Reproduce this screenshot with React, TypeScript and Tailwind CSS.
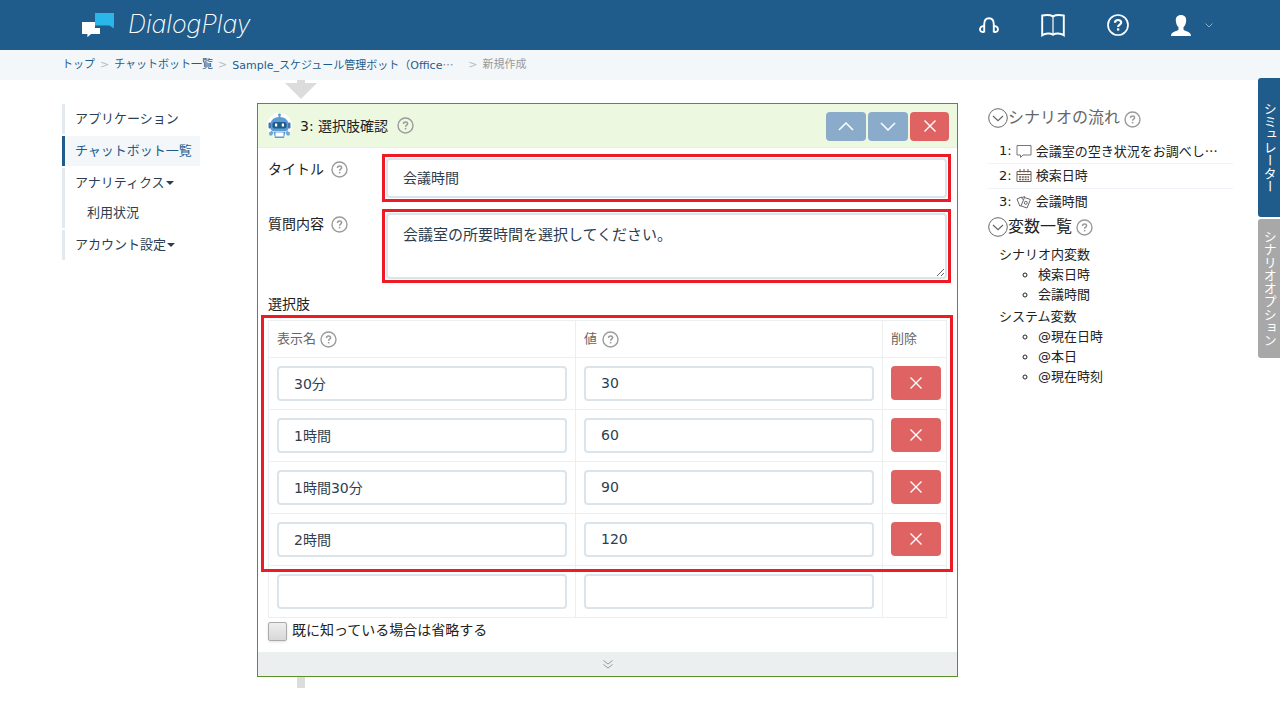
import React from "react";

const JP = "font-['Noto_Sans_CJK_JP',sans-serif]";

function HelpIcon({ className = "" }: { className?: string }) {
  return (
    <svg viewBox="0 0 17 17" className={"h-[17px] w-[17px] shrink-0 text-[#9b9b9b] " + className} fill="none" stroke="currentColor" aria-label="ヘルプ">
      <circle cx="8.5" cy="8.5" r="7.5" strokeWidth="1.4" />
      <path d="M6.5 7C6.5 5.700 7.300 5 8.500 5S10.600 5.700 10.600 6.700C10.600 8.100 8.600 8.200 8.600 9.700" strokeWidth="1.500" />
      <path d="M8.600 10.900V12.400" strokeWidth="1.600" />
    </svg>
  );
}

function Cross() {
  return (
    <svg viewBox="0 0 12 12" className="h-3 w-3" fill="none" stroke="#fff" strokeWidth="1.4" aria-hidden="true">
      <path d="M.5.5 11.5 11.5M11.5.5.5 11.5" />
    </svg>
  );
}

function Chevron({ up = false }: { up?: boolean }) {
  return (
    <svg viewBox="0 0 16 9" className="h-[9px] w-4" fill="none" stroke="#fff" strokeWidth="1.5" aria-hidden="true">
      <path d={up ? "M1 8 8 1 15 8" : "M1 1 8 8 15 1"} />
    </svg>
  );
}

function CircleChevron() {
  return (
    <svg viewBox="0 0 20 20" className="h-5 w-5 shrink-0" fill="none" stroke="#666" aria-hidden="true">
      <circle cx="10" cy="10" r="9.3" />
      <path d="M5 8 10 12.7 15 8" strokeWidth="1.2" />
    </svg>
  );
}

function Robot() {
  return (
    <svg viewBox="0 0 25 27" className="h-[27px] w-[25px] shrink-0" aria-hidden="true">
      <circle cx="12.500" cy="13.500" r="12.500" fill="#fff" />
      <path d="M11.600 3h1.800v4h-1.800z" fill="#5b9bd1" />
      <circle cx="12.500" cy="2.800" r="1.400" fill="#5b9bd1" />
      <path d="M3.500 12.500C3.500 8 7.200 5 12.500 5S21.500 8 21.500 12.500V16c0 2-1.500 3.300-3.500 3.300H7c-2 0-3.500-1.300-3.500-3.300z" fill="#5b9bd1" />
      <rect x="1.500" y="10.500" width="2.500" height="6" rx="1" fill="#3f78b0" />
      <rect x="21" y="10.500" width="2.500" height="6" rx="1" fill="#3f78b0" />
      <rect x="5.500" y="10" width="14" height="6.500" rx="2" fill="#1f5c8b" />
      <rect x="8" y="11.500" width="2.200" height="3" fill="#fff" />
      <rect x="14.800" y="11.500" width="2.200" height="3" fill="#fff" />
      <path d="M6.500 19.800h12L17 26H8z" fill="#5b9bd1" />
      <rect x="8.500" y="20.500" width="8" height="4" fill="#fff" />
      <path d="M2 20.500 5 18.800 6.500 21 5 23.500H2.500z" fill="#6fa6d6" />
      <path d="M23 20.500 20 18.800 18.500 21 20 23.500h2.500z" fill="#6fa6d6" />
    </svg>
  );
}

function Logo() {
  return (
    <svg viewBox="0 0 32 24" className="h-6 w-8" aria-hidden="true">
      <path d="M0 9h13v6h5v6H9l-3.6 3.3V21H0z" fill="#fff" />
      <path d="M13 0h19v12.500h-.2v3L27.500 12.500H13z" fill="#29b6e8" />
    </svg>
  );
}

const inputBase = "block w-full rounded border-2 border-[#dae4ec] bg-white text-sm text-[#2c3e50] outline-none";

const choices = [
  { name: "30分", value: "30" },
  { name: "1時間", value: "60" },
  { name: "1時間30分", value: "90" },
  { name: "2時間", value: "120" },
  { name: "", value: "" },
];

function Header() {
  return (
    <header className="flex h-[50px] items-center bg-[#1f5c8b] pr-[67px] pl-[82px] text-white">
      <a href="#" className="flex items-center gap-[14px]">
        <Logo />
        <span className="font-['Inter',sans-serif] text-[25px] font-extralight italic">DialogPlay</span>
      </a>
      <nav className="ml-auto flex items-center gap-[42px]">
        <a href="#" aria-label="サポート">
          <svg viewBox="0 0 20 18" className="h-[18px] w-5" fill="none" stroke="#fff" strokeWidth="1.9">
            <path d="M5.200 16.500V8.500C5.200 4.500 7 2.200 10 2.200S14.800 4.500 14.800 8.500V16.500" />
            <path d="M5 10.200C2.500 9.800 1 11.500 1 13.300S2.500 16.300 5 16M15 10.200C17.500 9.800 19 11.500 19 13.300S17.500 16.300 15 16" />
          </svg>
        </a>
        <a href="#" aria-label="マニュアル">
          <svg viewBox="0 0 24 23" className="h-[23px] w-6" fill="none" stroke="#fff" strokeWidth="1.900">
            <path d="M12 2.300C9.500.900 4.500.900 1.200 1.500V21.300C4.500 19 9.500 19 12 20.800 14.500 19 19.500 19 22.800 21.300V1.500C19.500.900 14.500.900 12 2.300Z" />
            <path d="M12 2.500V21" strokeWidth="1.200" />
          </svg>
        </a>
        <a href="#" aria-label="ヘルプ">
          <svg viewBox="0 0 22 22" className="h-[22px] w-[22px]" fill="none" stroke="#fff">
            <circle cx="11" cy="11" r="10" strokeWidth="1.700" />
            <path d="M8 8.800C8 7 9.300 6 11 6S14.200 7 14.200 8.600C14.200 10.600 11.100 10.600 11.100 13" strokeWidth="2.200" />
            <path d="M11.100 14.300V16.600" strokeWidth="2.300" />
          </svg>
        </a>
        <button type="button" className="flex items-center gap-[14px]" aria-label="アカウント">
          <svg viewBox="0 0 20 21" className="h-[21px] w-5" fill="#fff">
            <path d="M10 0C6.500 0 4.700 2.300 4.800 5.500 4.900 8.500 6 10.800 7.500 12.200V14.500C7.500 16 0 16 0 21H20C20 16 12.500 16 12.500 14.500V12.200C14 10.800 15.100 8.500 15.200 5.500 15.300 2.300 13.500 0 10 0Z" />
          </svg>
          <svg viewBox="0 0 8 5" className="h-[5px] w-2" fill="none" stroke="#8fa9bd">
            <path d="M.500.500 4 4 7.500.500" />
          </svg>
        </button>
      </nav>
    </header>
  );
}

function Breadcrumb() {
  const sep = <span className="text-[#bbb]">&gt;</span>;
  return (
    <nav className="flex h-[30px] items-center gap-[5px] bg-[#f3f7fa] pt-px pl-[62px] text-[11px] text-[#1f5c8b]">
      <a href="#">トップ</a>
      {sep}
      <a href="#">チャットボット一覧</a>
      {sep}
      <a href="#" className="w-[231px] whitespace-nowrap">
        Sample_スケジュール管理ボット（Office<span className={JP + " text-[#888]"}>…</span>
      </a>
      {sep}
      <span className="text-[#999]">新規作成</span>
    </nav>
  );
}

function SideNav() {
  const item = "flex h-[30px] items-center pl-[10px]";
  const caret = <span className="ml-px border-x-4 border-t-4 border-x-transparent border-t-[#2c3e50]" />;
  return (
    <nav className="flex w-[138px] shrink-0 flex-col gap-[2px] pt-6 text-[13px] whitespace-nowrap text-[#2c3e50]">
      <a href="#" className={item + " border-l-[3px] border-[#e1eaf2]"}>アプリケーション</a>
      <a href="#" className={item + " border-l-[3px] border-[#1f5c8b] bg-[#f3f7fa] text-[#1f5c8b]"}>チャットボット一覧</a>
      <div className="border-l-[3px] border-[#e1eaf2]">
        <a href="#" className={item}>アナリティクス{caret}</a>
        <a href="#" className="flex h-[30px] items-center pl-[22px]">利用状況</a>
      </div>
      <a href="#" className={item + " border-l-[3px] border-[#e1eaf2]"}>アカウント設定{caret}</a>
    </nav>
  );
}

function ChoiceTable() {
  const cell = "border border-[#ebefef] p-2";
  return (
    <div className="relative">
      <table className="w-full table-fixed border-collapse">
        <colgroup>
          <col />
          <col />
          <col className="w-16" />
        </colgroup>
        <thead>
          <tr className="h-[37px] text-left text-[13px] text-[#666]">
            <th className="border border-[#ebefef] px-2 font-normal">
              <span className="flex items-center gap-1">表示名<HelpIcon /></span>
            </th>
            <th className="border border-[#ebefef] px-2 font-normal">
              <span className="flex items-center gap-[5px]">値<HelpIcon /></span>
            </th>
            <th className="border border-[#ebefef] px-2 font-normal">削除</th>
          </tr>
        </thead>
        <tbody>
          {choices.map((c, i) => (
            <tr key={i}>
              <td className={cell}>
                <input aria-label="表示名" defaultValue={c.name} className={inputBase + " h-[35px] px-[15px] pb-[2px]"} />
              </td>
              <td className={cell}>
                <input aria-label="値" defaultValue={c.value} className={inputBase + " h-[35px] px-[15px] pb-[2px]"} />
              </td>
              <td className="border border-[#ebefef] py-2 pr-1 pl-2 align-top">
                {c.name && (
                  <button type="button" aria-label="削除" className="flex h-[34px] w-[50px] items-center justify-center rounded bg-[#e06363]">
                    <Cross />
                  </button>
                )}
              </td>
            </tr>
          ))}
        </tbody>
      </table>
      <div className="pointer-events-none absolute -top-[5px] -right-[6px] bottom-[46px] -left-[7px] border-3 border-[#ed1c24]" />
    </div>
  );
}

function Editor() {
  const label = "flex w-[118px] shrink-0 items-center gap-[7px] self-start h-[22px]";
  return (
    <main className="ml-[57px] min-w-0 flex-1 text-sm text-[#222]">
      <svg viewBox="0 0 32 19" className="ml-7 h-[19px] w-8" fill="#dcdcdc" aria-hidden="true">
        <path d="M12 0h8v3h12L16 19 0 3h12z" />
      </svg>
      <section className="mt-1 border border-[#5a9125]">
        <div className="flex h-11 items-center border-b border-[#e8ecec] bg-[#ecf8e0] pr-2 pl-[9px]">
          <Robot />
          <h2 className="ml-2">3: 選択肢確認</h2>
          <HelpIcon className="ml-[9px]" />
          <div className="ml-auto flex gap-[2px] pt-px">
            <button type="button" aria-label="上へ" className="flex h-[29px] w-10 items-center justify-center rounded bg-[#8babcb]"><Chevron up /></button>
            <button type="button" aria-label="下へ" className="flex h-[29px] w-10 items-center justify-center rounded bg-[#8babcb]"><Chevron /></button>
            <button type="button" aria-label="削除" className="flex h-[29px] w-[39px] items-center justify-center rounded bg-[#e06363]"><Cross /></button>
          </div>
        </div>
        <div className="px-[10px] pt-[10px]">
          <div className="flex">
            <label htmlFor="title" className={label}>タイトル<HelpIcon /></label>
            <div className="relative flex-1">
              <input id="title" defaultValue="会議時間" className={inputBase + " h-10 px-[15px] pb-[2px]"} />
              <div className="pointer-events-none absolute -inset-1 border-3 border-[#ed1c24]" />
            </div>
          </div>
          <div className="mt-[15px] flex">
            <label htmlFor="question" className={label}>質問内容<HelpIcon /></label>
            <div className="relative flex-1">
              <textarea id="question" defaultValue="会議室の所要時間を選択してください。" className="block h-[66px] w-full rounded border-2 border-[#dae4ec] bg-white px-[15px] py-2 text-[15px] leading-6 text-[#2c3e50] outline-none" />
              <div className="pointer-events-none absolute -inset-1 border-3 border-[#ed1c24]" />
            </div>
          </div>
          <h3 className="mt-[15px] mb-[6px] leading-5">選択肢</h3>
          <ChoiceTable />
          <div className="mt-1 flex h-[30px] gap-[5px]">
            <input id="skip" type="checkbox" className="h-[19px] w-[19px] appearance-none rounded-[2px] border border-[#aaa] bg-linear-to-b from-[#eee] to-[#d8d8d8] shadow-sm" />
            <label htmlFor="skip" className="leading-4">既に知っている場合は省略する</label>
          </div>
        </div>
        <button type="button" aria-label="詳細を開く" className="flex h-6 w-full items-center justify-center bg-[#ebefef]">
          <svg viewBox="0 0 10 9" className="h-[9px] w-[10px]" fill="none" stroke="#999" aria-hidden="true">
            <path d="M.500.500 5 4 9.500.500M.500 4.500 5 8 9.500 4.500" />
          </svg>
        </button>
      </section>
      <div className="ml-10 h-[11px] w-2 bg-[#dcdcdc]" />
    </main>
  );
}

function SpeechIcon() {
  return (
    <svg viewBox="0 0 16 14" className="h-[14px] w-4" fill="none" stroke="#777" aria-hidden="true">
      <path d="M1 1.500h14v9.500H7L4.500 13.500V11H1z" />
    </svg>
  );
}

function CalendarIcon() {
  return (
    <svg viewBox="0 0 16 14" className="h-[14px] w-4" fill="none" stroke="#6b5d50" aria-hidden="true">
      <path d="M1 2.500h14v10H1zM1 5.500h14M4 0v3.500M8 0v3.500M12 0v3.500" />
      <path d="M3 8h10M3 10.500h10" strokeWidth="1.500" strokeDasharray="2 .8" />
    </svg>
  );
}

function CardsIcon() {
  return (
    <svg viewBox="0 0 16 14" className="h-[14px] w-4" fill="none" stroke="#666" aria-hidden="true">
      <path d="M8.500 2.500 14.500 4.500 11 13 5 10.800z" />
      <path d="M5 10.800 3.800 11 1 4 5.500 2 6.500 4.500M6 2.500 9 1.500" />
      <circle cx="9.800" cy="7.800" r="1.500" />
    </svg>
  );
}

function Outline() {
  const heading = "flex items-center text-base";
  return (
    <aside className="ml-[30px] w-[245px] shrink-0 pt-6 text-[13px] text-[#222]">
      <h2 className={heading + " h-[34px] pb-[6px] text-[#666]"}>
        <CircleChevron />シナリオの流れ<HelpIcon className="mt-[2px] ml-1" />
      </h2>
      <ol className="divide-y divide-[#f0f4f8] whitespace-nowrap">
        <li className="flex h-[26px] items-center gap-1 pl-[11px]">1: <SpeechIcon /><a href="#" className={JP}>会議室の空き状況をお調べし…</a></li>
        <li className="flex h-[25px] items-center gap-1 pl-[11px]">2: <CalendarIcon /><a href="#">検索日時</a></li>
        <li className="flex h-[25px] items-center gap-1 pl-[11px]">3: <CardsIcon /><a href="#">会議時間</a></li>
      </ol>
      <h2 className={heading + " h-[31px] pb-[6px]"}>
        <CircleChevron />変数一覧<HelpIcon className="mt-[2px] ml-1" />
      </h2>
      <div className="pl-[11px] leading-5">
        <h3>シナリオ内変数</h3>
        <ul className="mb-[2px] list-[circle] pl-[39px]">
          <li>検索日時</li>
          <li>会議時間</li>
        </ul>
        <h3>システム変数</h3>
        <ul className="list-[circle] pl-[39px]">
          <li>@現在日時</li>
          <li>@本日</li>
          <li>@現在時刻</li>
        </ul>
      </div>
    </aside>
  );
}

export default function App() {
  const tab = "flex h-[139px] w-[22px] items-center justify-center rounded-l-[3px] text-[13px] text-white [writing-mode:vertical-rl]";
  return (
    <div lang="ja" className="relative min-h-screen bg-white font-['DejaVu_Sans','Noto_Sans_CJK_JP',sans-serif]">
      <Header />
      <Breadcrumb />
      <div className="flex pr-[47px] pl-[62px]">
        <SideNav />
        <Editor />
        <Outline />
      </div>
      <div className="absolute top-[78px] right-0 flex flex-col gap-[2px]">
        <button type="button" className={tab + " bg-[#1f5c8b]"}>シミュレーター</button>
        <button type="button" className={tab + " bg-[#a8a8a8]"}>シナリオオプション</button>
      </div>
    </div>
  );
}
